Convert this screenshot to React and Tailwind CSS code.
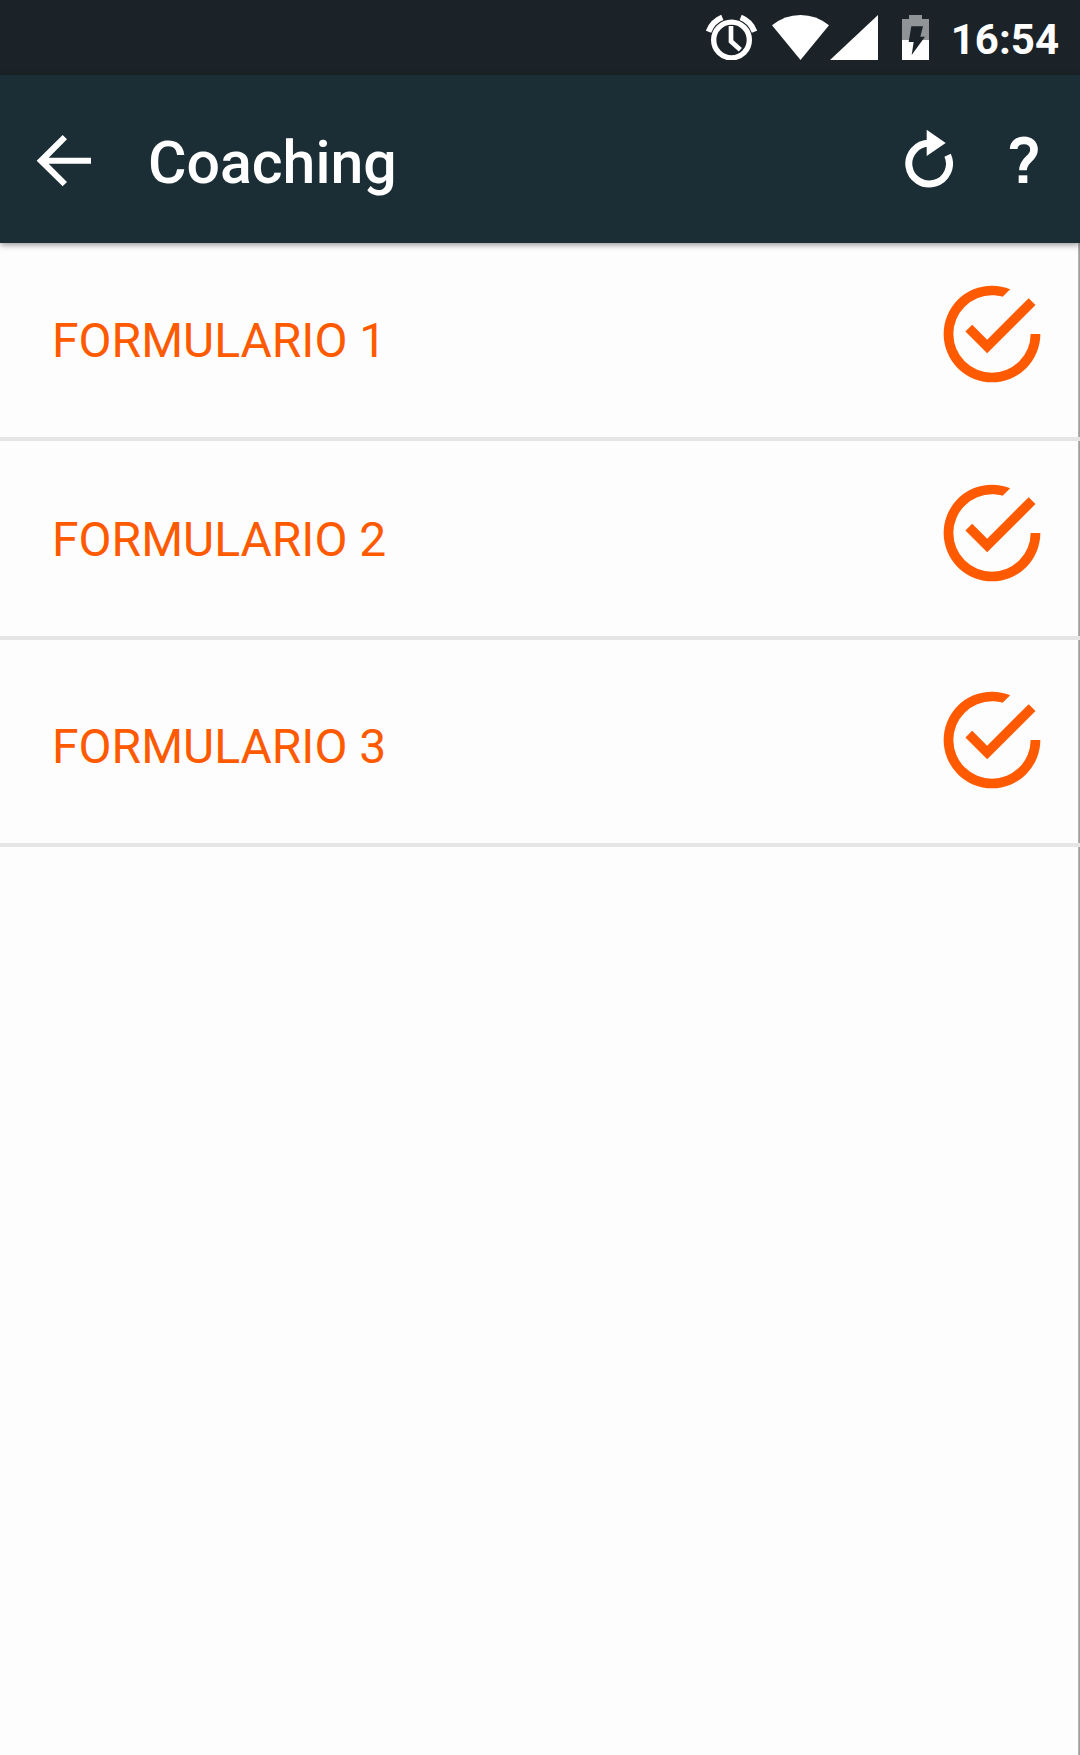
const forms = [
  { name: "FORMULARIO 1", row: "h-[198px] pt-[33px]" },
  { name: "FORMULARIO 2", row: "h-[199px] pt-[34px]" },
  { name: "FORMULARIO 3", row: "h-[207px] pt-[42px]" },
];

function AlarmIcon() {
  return (
    <svg viewBox="49 42 153 138" className="w-[51px] h-[46px]" fill="none" stroke="currentColor" aria-hidden="true">
      <circle cx="125.5" cy="120" r="53.5" strokeWidth="16" />
      <path d="M124 78V124L152 149" strokeWidth="14" />
      <path d="M56.500 95A73 73 0 0 1 98 52M194.500 95A73 73 0 0 0 153 52" strokeWidth="17" />
    </svg>
  );
}

function WifiIcon() {
  return (
    <svg viewBox="247 42 171 138" className="w-[57px] h-[46px] ml-[15px]" fill="currentColor" aria-hidden="true">
      <path d="M247 76Q285 45 332.500 45T418 76L332.500 180Z" />
    </svg>
  );
}

function SignalIcon() {
  return (
    <svg viewBox="420 42 144 138" className="w-12 h-[46px] ml-px" fill="currentColor" aria-hidden="true">
      <path d="M564 45V180H420Z" />
    </svg>
  );
}

function BatteryIcon() {
  return (
    <svg viewBox="66 42 81 138" className="w-[27px] h-[46px] ml-6" aria-hidden="true">
      <path d="M87 45H126V57H147V120H66V57H87Z" fill="#909497" />
      <path d="M66 120H147V180H66Z" fill="#fff" />
      <path d="M94 79H129L121 110H135L95 165L101 126H86Z" fill="#1b2328" />
    </svg>
  );
}

function BackIcon() {
  return (
    <svg viewBox="108 102 168 162" className="w-14 h-[54px]" fill="currentColor" aria-hidden="true">
      <path d="M110 182L188 105L201 118L146 173H273V191H146L201 246L188 259Z" />
    </svg>
  );
}

function RefreshIcon() {
  return (
    <svg viewBox="76 57 144 180" className="w-12 h-[60px]" aria-hidden="true">
      <path d="M203.800 135.500A61 61 0 1 1 148.500 100" fill="none" stroke="currentColor" strokeWidth="21" />
      <path d="M141 59L198 99L141 138Z" fill="currentColor" />
    </svg>
  );
}

function HelpIcon() {
  return (
    <svg viewBox="388 78 90 144" className="w-[30px] h-12" aria-hidden="true">
      <path d="M402 117C402 101 415 91 433 91C451 91 463 102 463 119C463 147 430 147 430 181" fill="none" stroke="currentColor" strokeWidth="23" />
      <path d="M417 196H443V219H417Z" fill="currentColor" />
    </svg>
  );
}

function DoneIcon() {
  return (
    <svg viewBox="0 0 24 24" className="size-[116px] shrink-0" fill="currentColor" aria-hidden="true">
      <path d="M20 12A8 8 0 1 1 12 4C12.760 4 13.500 4.110 14.200 4.310L15.770 2.740C14.610 2.260 13.340 2 12 2A10 10 0 1 0 22 12ZM7.910 10.080L6.500 11.500L11 16L21 6L19.590 4.580L11 13.170Z" />
    </svg>
  );
}

export default function App() {
  return (
    <div className="min-h-screen flex flex-col bg-[#fdfdfd] font-[Roboto,sans-serif]">
      <div className="h-[75px] bg-[#1b2328] text-white flex items-center justify-end pb-0.5 pr-[21px]">
        <AlarmIcon />
        <WifiIcon />
        <SignalIcon />
        <BatteryIcon />
        <time className="ml-[22px] pt-1.5 text-[42px] leading-12 font-bold">16:54</time>
      </div>
      <header className="relative h-[168px] bg-[#1b2e35] text-white flex items-center pl-9 pr-[41px] shadow-[0_2px_6px_rgba(0,0,0,0.4)]">
        <button type="button" aria-label="Volver" className="pt-1">
          <BackIcon />
        </button>
        <h1 className="ml-14 pt-2 flex-1 text-[59px] leading-[72px] font-medium">Coaching</h1>
        <button type="button" aria-label="Actualizar">
          <RefreshIcon />
        </button>
        <button type="button" aria-label="Ayuda" className="ml-14 pt-0.5">
          <HelpIcon />
        </button>
      </header>
      <main className="flex-1 bg-linear-to-l from-[#a0a0a0] from-[1px] via-[#c4c4c4] via-[2px] to-[#fdfdfd] to-[2px]">
        <ul>
          {forms.map((form) => (
            <li key={form.name}>
              <button
                type="button"
                className={`w-full flex items-start justify-between pl-13 pr-[30px] border-b-4 border-[#e5e5e5] text-[#ff5a00] text-left ${form.row}`}
              >
                <span className="mt-[37px] text-[48px] leading-14">{form.name}</span>
                <DoneIcon />
              </button>
            </li>
          ))}
        </ul>
      </main>
    </div>
  );
}
